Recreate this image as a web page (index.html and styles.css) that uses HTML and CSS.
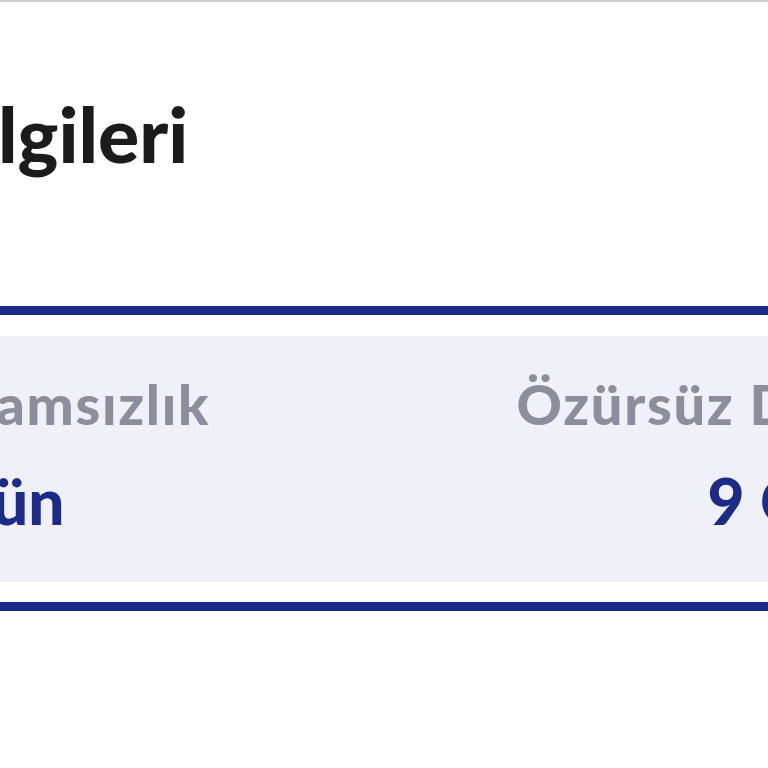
FILE: index.html
```html
<!DOCTYPE html>
<html lang="tr">
<head>
    <meta charset="UTF-8">
    <meta name="viewport" content="width=device-width, initial-scale=1.0">
    <title>Devamsızlık Bilgileri</title>
    <link rel="stylesheet" href="styles.css">
</head>
<body>
    <div class="top-line"></div>
    <div class="page">
        <h1 class="section-title">Devamsızlık Bilgileri</h1>
        <div class="absence-card">
            <div class="absence-panel">
                <div class="absence-item">
                    <span class="absence-label">Özürlü Devamsızlık</span>
                    <span class="absence-value">1,5 Gün</span>
                </div>
                <div class="absence-item">
                    <span class="absence-label">Özürsüz Devamsızlık</span>
                    <span class="absence-value">9 Gün</span>
                </div>
            </div>
        </div>
    </div>
</body>
</html>
```

FILE: styles.css
```css
html, body{
    margin: 0;
    padding: 0;
    background: #fff;
    overflow: hidden;
    font-family: Lato, "Open Sans", sans-serif;
}
.top-line{
    height: 2px;
    background-color: #cfcfcf;
}
.page{
    width: 1800px;
    margin-left: -520px;
}
.section-title{
    margin: 93px 0 0 15px;
    font-size: 77px;
    line-height: 1;
    font-weight: 900;
    color: #1b1b1b;
}
.absence-card{
    margin-top: 134px;
    border-top: solid 9px #1b2a88;
    border-bottom: solid 9px #1b2a88;
    padding: 21px 0 20px 0;
}
.absence-panel{
    background-color: #f0f1f8;
    padding: 40px 0 49px 43px;
    display: grid;
    grid-template-columns: 860px 820px;
}
.absence-item{
    display: flex;
    flex-direction: column;
    align-items: center;
    gap: 37px;
    white-space: nowrap;
}
.absence-label{
    font-size: 56px;
    line-height: 1;
    font-weight: 900;
    letter-spacing: 1.7px;
    color: #8c8f9b;
}
.absence-value{
    font-size: 64px;
    line-height: 1;
    font-weight: 900;
    color: #1c2b86;
}
```
